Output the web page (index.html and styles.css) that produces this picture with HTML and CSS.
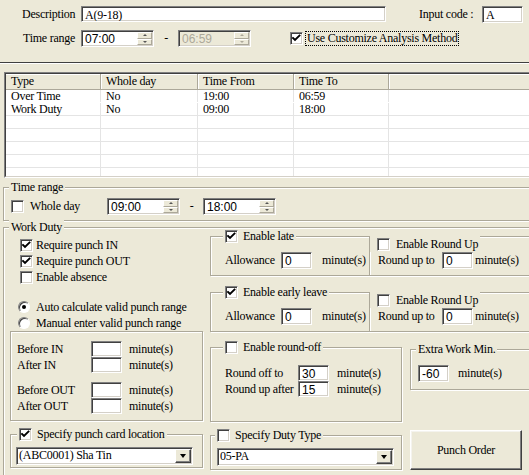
FILE: index.html
```html
<!DOCTYPE html>
<html>
<head>
<meta charset="utf-8">
<title>Duty</title>
<link rel="stylesheet" href="styles.css">
</head>
<body>
<div class="dlg">
  <div class="hrow r1">
    <span class="l-desc">Description</span>
    <div class="fld desc">A(9-18)</div>
    <span class="l-code">Input code :</span>
    <div class="fld code">A</div>
  </div>
  <div class="hrow r2">
    <span class="l-tr">Time range</span>
    <div class="spin"><span class="sv sans">07:00</span><span class="sb"><i><b class="au"></b></i><i><b class="ad"></b></i></span></div>
    <span class="dash">-</span>
    <div class="spin dis"><span class="sv sans">06:59</span><span class="sb"><i><b class="au"></b></i><i><b class="ad"></b></i></span></div>
    <span class="cust"><span class="cb on"><svg viewBox="0 0 11 11"><polyline points="2,5 4,7 8.5,2.5"/></svg></span><span class="focus">Use Customize Analysis Method</span></span>
  </div>
  <div class="sep"></div>

  <div class="list">
    <div class="list-in">
      <div class="lh">
        <span>Type</span><span>Whole day</span><span>Time From</span><span>Time To</span><span></span>
      </div>
      <div class="lr first"><span>Over Time</span><span>No</span><span>19:00</span><span>06:59</span><span></span></div>
      <div class="lr"><span>Work Duty</span><span>No</span><span>09:00</span><span>18:00</span><span></span></div>
      <div class="lr"><span></span><span></span><span></span><span></span><span></span></div>
      <div class="lr"><span></span><span></span><span></span><span></span><span></span></div>
      <div class="lr"><span></span><span></span><span></span><span></span><span></span></div>
      <div class="lr"><span></span><span></span><span></span><span></span><span></span></div>
      <div class="lr"><span></span><span></span><span></span><span></span><span></span></div>
    </div>
  </div>

  <div class="grp g-tr">
    <div class="cap">Time range</div>
    <div class="tr-row">
      <span class="cb"></span>
      <span class="l-wd">Whole day</span>
      <div class="spin"><span class="sv sans">09:00</span><span class="sb"><i><b class="au"></b></i><i><b class="ad"></b></i></span></div>
      <span class="dash2">-</span>
      <div class="spin"><span class="sv sans">18:00</span><span class="sb"><i><b class="au"></b></i><i><b class="ad"></b></i></span></div>
    </div>
  </div>

  <div class="grp g-wd">
    <div class="cap cap-wd">Work Duty</div>
    <div class="wd-body">
      <div class="wd-left">
        <div class="chks">
          <div class="crow"><span class="cb on"><svg viewBox="0 0 11 11"><polyline points="2,5 4,7 8.5,2.5"/></svg></span><span>Require punch IN</span></div>
          <div class="crow"><span class="cb on"><svg viewBox="0 0 11 11"><polyline points="2,5 4,7 8.5,2.5"/></svg></span><span>Require punch OUT</span></div>
          <div class="crow"><span class="cb"></span><span>Enable absence</span></div>
        </div>
        <div class="radios">
          <div class="rrow"><span class="rd on"></span><span>Auto calculate valid punch range</span></div>
          <div class="rrow"><span class="rd"></span><span>Manual enter valid punch range</span></div>
        </div>
        <div class="grp g-inner">
          <div class="irow"><span class="il">Before IN</span><div class="fld num"></div><span class="mn">minute(s)</span></div>
          <div class="irow"><span class="il">After IN</span><div class="fld num"></div><span class="mn">minute(s)</span></div>
          <div class="irow gap"><span class="il">Before OUT</span><div class="fld num"></div><span class="mn">minute(s)</span></div>
          <div class="irow"><span class="il">After OUT</span><div class="fld num"></div><span class="mn">minute(s)</span></div>
        </div>
        <div class="grp g-loc">
          <div class="cap cap-chk"><span class="cb on"><svg viewBox="0 0 11 11"><polyline points="2,5 4,7 8.5,2.5"/></svg></span><span>Specify punch card location</span></div>
          <div class="combo"><span class="cv">(ABC0001) Sha Tin</span><span class="dd"><b></b></span></div>
        </div>
      </div>

      <div class="wd-right">
        <div class="pair">
          <div class="grp g-al">
            <div class="cap cap-chk c-al"><span class="cb on"><svg viewBox="0 0 11 11"><polyline points="2,5 4,7 8.5,2.5"/></svg></span><span>Enable late</span></div>
            <div class="arow"><span class="l-al">Allowance</span><div class="fld num sans">0</div><span class="mn m-al">minute(s)</span></div>
          </div>
          <div class="grp g-ru">
            <div class="cap cap-chk c-ru"><span class="cb"></span><span>Enable Round Up</span></div>
            <div class="arow"><span class="l-ru">Round up to</span><div class="fld num sans">0</div><span class="mn m-ru">minute(s)</span></div>
          </div>
        </div>
        <div class="pair p2">
          <div class="grp g-al">
            <div class="cap cap-chk c-al"><span class="cb on"><svg viewBox="0 0 11 11"><polyline points="2,5 4,7 8.5,2.5"/></svg></span><span>Enable early leave</span></div>
            <div class="arow"><span class="l-al">Allowance</span><div class="fld num sans">0</div><span class="mn m-al">minute(s)</span></div>
          </div>
          <div class="grp g-ru">
            <div class="cap cap-chk c-ru"><span class="cb"></span><span>Enable Round Up</span></div>
            <div class="arow"><span class="l-ru">Round up to</span><div class="fld num sans">0</div><span class="mn m-ru">minute(s)</span></div>
          </div>
        </div>
        <div class="row-c">
          <div class="grp g-ro">
            <div class="cap cap-chk c-al"><span class="cb"></span><span>Enable round-off</span></div>
            <div class="rorows">
              <div class="irow"><span class="l-ro">Round off to</span><div class="fld num sans">30</div><span class="mn m-ro">minute(s)</span></div>
              <div class="irow"><span class="l-ro">Round up after</span><div class="fld num sans">15</div><span class="mn m-ro">minute(s)</span></div>
            </div>
          </div>
          <div class="grp g-ex">
            <div class="cap c-ex">Extra Work Min.</div>
            <div class="arow ex-row"><div class="fld num sans">-60</div><span class="mn m-ex">minute(s)</span></div>
          </div>
        </div>
        <div class="row-d">
          <div class="grp g-dt">
            <div class="cap cap-chk c-dt"><span class="cb"></span><span>Specify Duty Type</span></div>
            <div class="combo c2"><span class="cv">05-PA</span><span class="dd"><b></b></span></div>
          </div>
          <div class="btn">Punch Order</div>
        </div>
      </div>
    </div>
  </div>
</div>
</body>
</html>
```
FILE: styles.css
```css
* { box-sizing: border-box; margin: 0; padding: 0; }
html, body { width: 529px; height: 475px; overflow: hidden; }
body {
  background: #ece9d8;
  font-family: "Liberation Serif", "DejaVu Serif", serif;
  font-size: 12px;
  letter-spacing: -0.25px;
  color: #000;
}
.sans { font-family: "Liberation Sans", Arial, sans-serif; font-size: 12px; letter-spacing: 0; }
.dlg { width: 529px; }

/* generic sunken field */
.fld {
  background: #fff;
  border: 1px solid;
  border-color: #808080 #fff #fff #808080;
  box-shadow: inset 1px 1px 0 #404040, inset -1px -1px 0 #d4d0c8;
  height: 16px;
  padding: 2px 0 0 3px;
  line-height: 12px;
  white-space: nowrap;
  overflow: hidden;
}

/* header rows */
.hrow { display: flex; align-items: center; }
.r1 { height: 16px; margin-top: 6px; padding-left: 22px; }
.l-desc { width: 59px; }
.desc { width: 305px; }
.l-code { margin-left: 33px; width: 63px; }
.code { width: 41px; height: 17px; }
.r2 { height: 17px; margin-top: 8px; padding-left: 23px; }
.l-tr { width: 58px; }
.dash { width: 24px; text-align: center; }

.spin {
  width: 73px; height: 17px;
  display: flex;
  background: #fff;
  border: 1px solid;
  border-color: #808080 #fff #fff #808080;
  box-shadow: inset 1px 1px 0 #404040, inset -1px -1px 0 #d4d0c8;
}
.spin .sv { flex: 1; padding: 2px 0 0 3px; line-height: 12px; }
.spin.dis { background: #ece9d8; }
.spin.dis .sv { color: #aca899; }
.sb { width: 15px; display: flex; flex-direction: column; margin: 1px 1px 1px 0; }
.sb i {
  flex: 1; display: flex; align-items: center; justify-content: center;
  background: #ece9d8;
  border: 1px solid; border-color: #fff #aca899 #aca899 #fff;
}
.sb b { width: 0; height: 0; border-left: 2px solid transparent; border-right: 2px solid transparent; }
.sb b.au { border-bottom: 2px solid #555; }
.sb b.ad { border-top: 2px solid #555; }
.dis .sb b.au { border-bottom-color: #aca899; }
.dis .sb b.ad { border-top-color: #aca899; }

.cust { display: flex; align-items: center; margin-left: 39px; }
.cust .cb { margin-right: 3px; }
.focus { outline: 1px dotted #000; outline-offset: 0; padding: 0 1px; line-height: 13px; }

/* checkbox */
.cb {
  width: 13px; height: 13px; flex: none;
  background: #fff;
  border: 1px solid; border-color: #808080 #fff #fff #808080;
  box-shadow: inset 1px 1px 0 #404040, inset -1px -1px 0 #d4d0c8;
  display: flex; align-items: center; justify-content: center;
}
.cb svg { width: 11px; height: 11px; }
.cb polyline { fill: none; stroke: #000; stroke-width: 1.9; stroke-linecap: square; }

/* radio */
.rd {
  width: 12px; height: 12px; flex: none; border-radius: 50%;
  background: #fff;
  border: 1px solid; border-color: #808080 #fff #fff #808080;
  box-shadow: inset 1px 1px 0 #404040;
  display: flex; align-items: center; justify-content: center;
}
.rd.on::after { content: ""; width: 4px; height: 4px; border-radius: 50%; background: #000; }

.sep { margin-top: 15px; height: 2px; border-top: 1px solid #404040; border-bottom: 1px solid #fff; }

/* list view */
.list {
  margin: 8px 0 0 4px; width: 540px; height: 106px;
  border: 1px solid; border-color: #808080 #fff #fff #808080;
}
.list-in { height: 104px; border: 1px solid; border-color: #404040 #d4d0c8 #d4d0c8 #404040; background: #fff; overflow: hidden; }
.lh, .lr { display: grid; grid-template-columns: 95px 97px 96px 95px 1fr; }
.lh { height: 16px; background: #ece9d8; border-bottom: 1px solid #aca899; box-shadow: inset 0 1px 0 #fff; }
.lh span { padding-left: 5px; line-height: 15px; border-right: 1px solid #aca899; box-shadow: inset 1px 0 0 #fff; }
.lh span:first-child { box-shadow: none; }
.lr { height: 13px; border-bottom: 1px solid #e4e4e4; }
.lr.first { border-bottom-color: #fff; }
.lr span { padding-left: 5px; line-height: 12px; border-right: 1px solid #e4e4e4; white-space: nowrap; }

/* group boxes */
.grp {
  border: 1px solid #aca899;
  box-shadow: inset 1px 1px 0 #fff, 1px 1px 0 #fff;
}
.cap {
  display: flex; align-items: center; width: max-content;
  height: 14px; margin-top: -8px; margin-left: 5px; padding: 0 2px;
  background: #ece9d8;
}
.g-tr { margin: 9px 0 0 3px; width: 540px; height: 34px; }
.tr-row { display: flex; align-items: center; height: 17px; margin-top: 4px; padding-left: 7px; }
.l-wd { width: 83px; padding-left: 6px; }
.dash2 { width: 23px; text-align: center; }

.g-wd { margin: 6px 0 0 3px; width: 540px; height: 260px; }
.cap-wd { margin-bottom: -6px; position: relative; }
.wd-body { display: flex; align-items: flex-start; }
.wd-left { width: 193px; margin-left: 6px; }
.chks { margin-top: 9px; }
.crow { display: flex; align-items: center; height: 16px; padding-left: 10px; }
.crow .cb { margin-right: 3px; }
.radios { margin-top: 14px; }
.rrow { display: flex; align-items: center; height: 16px; padding-left: 8px; }
.rrow .rd { margin-right: 6px; }

.g-inner { height: 90px; padding: 9px 0 0 6px; }
.irow { display: flex; align-items: center; height: 16px; }
.irow.gap { margin-top: 9px; }
.il { width: 74px; }
.num { width: 31px; }
.irow .num { height: 16px; }
.mn { margin-left: 7px; }

.g-loc { margin-top: 13px; height: 34px; }
.cap-chk .cb { margin-right: 5px; }
.g-loc .cap { margin-left: 6px; }
.combo {
  display: flex; align-items: stretch; height: 18px; width: 177px;
  margin: 6px 0 0 5px;
  background: #fff;
  border: 1px solid; border-color: #808080 #fff #fff #808080;
  box-shadow: inset 1px 1px 0 #404040, inset -1px -1px 0 #d4d0c8;
}
.cv { flex: 1; padding-left: 2px; line-height: 15px; white-space: nowrap; }
.dd {
  width: 16px; margin: 1px 1px 1px 0;
  background: #ece9d8;
  border: 1px solid; border-color: #fff #404040 #404040 #fff;
  box-shadow: inset -1px -1px 0 #808080;
  display: flex; align-items: center; justify-content: center;
}
.dd b { width: 0; height: 0; border-left: 3.5px solid transparent; border-right: 3.5px solid transparent; border-top: 4px solid #000; }

.wd-right { margin-left: 7px; flex: 1; }
.pair { display: flex; margin-top: 8px; }
.pair.p2 { margin-top: 16px; }
.g-al { width: 160px; height: 40px; }
.g-ru { width: 170px; height: 40px; border-left: none; }
.c-al { margin-left: 12px; }
.c-ru { margin: -1px 0 0 0; height: 16px; padding-left: 7px; }
.c-ru .cb { margin-right: 6px; }
.arow { display: flex; align-items: center; height: 17px; }
.g-al .arow { margin-top: 9px; padding-left: 14px; }
.g-ru .arow { padding-left: 8px; }
.arow .num { height: 17px; }
.l-al { width: 56px; }
.m-al { margin-left: 10px; }
.l-ru { width: 64px; }
.m-ru { margin-left: 2px; }

.row-c { display: flex; align-items: flex-start; margin-top: 15px; }
.g-ro { width: 192px; height: 75px; }
.rorows { margin-top: 11px; padding-left: 14px; }
.l-ro { width: 73px; white-space: nowrap; }
.m-ro { margin-left: 8px; }
.g-ex { width: 130px; height: 41px; margin: 2px 0 0 8px; }
.c-ex { margin-left: 5px; }
.ex-row { margin-top: 9px; padding-left: 7px; }
.m-ex { margin-left: 9px; }

.row-d { display: flex; align-items: flex-start; margin-top: 13px; }
.g-dt { width: 192px; height: 35px; }
.c-dt { margin-left: 4px; }
.combo.c2 { width: 177px; margin-left: 6px; }
.btn {
  width: 112px; height: 40px; margin: -5px 0 0 8px;
  display: flex; align-items: center; justify-content: center;
  background: #ece9d8;
  border: 1px solid; border-color: #fff #404040 #404040 #fff;
  box-shadow: inset -1px -1px 0 #808080, inset 1px 1px 0 #f4f3ee;
}
```
